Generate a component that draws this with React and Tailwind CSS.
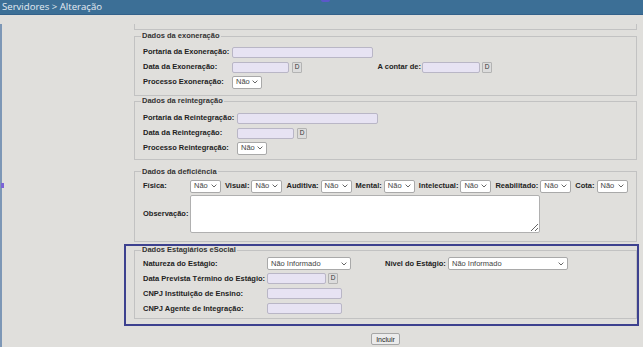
import React from 'react';

function Input({ w }) {
  return <div className={`h-[11px] bg-[#e7e3f3] border border-[#b9b6c6] rounded-[2px] ${w}`}></div>;
}

function DateBtn({ className = '' }) {
  return (
    <div className={`w-[10px] h-[11px] bg-[#dcdcdc] border border-[#b3b3b3] rounded-[1px] flex items-center justify-center text-[6.5px] leading-none text-[#333] ${className}`}>
      D
    </div>
  );
}

function Select({ w, text = 'Não', className = '' }) {
  return (
    <div className={`h-[13px] bg-white border border-[#a9a9a9] rounded-[2px] flex items-center justify-between pl-[3px] pr-[3px] ${w} ${className}`}>
      <span className="text-[7.5px] leading-none text-[#444]">{text}</span>
      <svg width="6" height="4" viewBox="0 0 6 4">
        <path d="M0.6 0.6 L3 3 L5.4 0.6" fill="none" stroke="#555" strokeWidth="0.9" />
      </svg>
    </div>
  );
}

function Box({ title, children, className = '' }) {
  return (
    <fieldset className={`w-[503px] border border-[#c2c2c2] px-[8px] ${className}`}>
      <legend className="ml-[-2px] px-[1px] text-[7.5px] leading-[10px] font-bold text-[#333]">{title}</legend>
      {children}
    </fieldset>
  );
}

export default function App() {
  return (
    <div className="w-[643px] h-[347px] overflow-hidden bg-[#e0dfdc] font-['Liberation_Sans',Arial,sans-serif] text-[7.5px] text-[#222]">
      {/* Title bar */}
      <div className="relative h-[15px] bg-[#3c6f96] border-b border-[#33618a] pl-[2px] font-['Open_Sans',sans-serif] text-[9.6px] leading-[14px] text-[#e4ecf3]">
        Servidores &gt; Alteração
        <div className="absolute left-[321px] top-0 w-[9px] h-[2px] rounded-b-[2px] bg-[#5b58c9]"></div>
      </div>

      <div className="relative h-[332px] border-l-2 border-[#7d97b6] pl-[122px]">
        <div className="absolute left-[-1px] top-[159px] w-[3px] h-[5px] bg-[#7b63d6]"></div>

        {/* Tail of the previous fieldset */}
        <div className="ml-[10px] mt-[9px] w-[503px] h-[6px] border-x border-b border-[#c2c2c2]"></div>

        <div className="ml-[10px]">
          <Box title="Dados da exoneração" className="mt-[1px] pt-[3.5px] pb-[5.5px]">
            <div className="flex items-center h-[15px]">
              <span className="w-[89px] font-bold">Portaria da Exoneração:</span>
              <Input w="w-[141px]" />
            </div>
            <div className="flex items-center h-[15px]">
              <span className="w-[89px] font-bold">Data da Exoneração:</span>
              <Input w="w-[57px]" />
              <DateBtn className="ml-[3px]" />
              <span className="w-[119px] text-right font-bold">A contar de:</span>
              <div className="ml-[1px]"><Input w="w-[58px]" /></div>
              <DateBtn className="ml-[2px]" />
            </div>
            <div className="flex items-center h-[15px]">
              <span className="w-[89px] font-bold">Processo Exoneração:</span>
              <Select w="w-[30px]" />
            </div>
          </Box>

          <Box title="Dados da reintegração" className="pt-[4.5px] pb-[3px]">
            <div className="flex items-center h-[15px]">
              <span className="w-[94px] font-bold">Portaria da Reintegração:</span>
              <Input w="w-[141px]" />
            </div>
            <div className="flex items-center h-[15px]">
              <span className="w-[94px] font-bold">Data da Reintegração:</span>
              <Input w="w-[57px]" />
              <DateBtn className="ml-[3px]" />
            </div>
            <div className="flex items-center h-[15px]">
              <span className="w-[94px] font-bold">Processo Reintegração:</span>
              <Select w="w-[30px]" />
            </div>
          </Box>

          <Box title="Dados da deficiência" className="mt-[7px] pt-[2px] pb-[7.5px]">
            <div className="flex items-center h-[15px]">
              <span className="w-[47px] font-bold">Física:</span>
              <Select w="w-[31px]" />
              <span className="ml-[4px] font-bold">Visual:</span>
              <Select w="w-[31px]" className="ml-[2px]" />
              <span className="ml-[4px] font-bold">Auditiva:</span>
              <Select w="w-[31px]" className="ml-[2px]" />
              <span className="ml-[4px] font-bold">Mental:</span>
              <Select w="w-[31px]" className="ml-[2px]" />
              <span className="ml-[4px] font-bold">Intelectual:</span>
              <Select w="w-[31px]" className="ml-[2px]" />
              <span className="ml-[4px] font-bold">Reabilitado:</span>
              <Select w="w-[31px]" className="ml-[2px]" />
              <span className="ml-[4px] font-bold">Cota:</span>
              <Select w="w-[31px]" className="ml-[2px]" />
            </div>
            <div className="flex items-center mt-[1.5px]">
              <span className="w-[47px] font-bold">Observação:</span>
              <textarea readOnly className="block w-[350px] h-[38px] bg-white border border-[#b0b0b0] rounded-[2px]"></textarea>
            </div>
          </Box>
        </div>

        {/* eSocial block */}
        <div className="mt-[2.5px] w-[515px] border-2 border-[#3d418f] pl-[8px] pb-[5.5px]">
          <fieldset className="w-[503px] border border-[#c2c2c2] px-[8px] pt-[2px] pb-[1.5px]">
            <legend className="ml-[-2px] px-[1px] text-[7.5px] leading-[8px] font-bold text-[#333]">Dados Estagiários eSocial</legend>
            <div className="flex items-center h-[15px]">
              <span className="w-[124px] font-bold">Natureza do Estágio:</span>
              <Select w="w-[84px]" text="Não Informado" />
              <span className="ml-[34px] w-[63px] font-bold">Nível do Estágio:</span>
              <Select w="w-[120px]" text="Não Informado" />
            </div>
            <div className="flex items-center h-[15px]">
              <span className="w-[124px] font-bold">Data Prevista Término do Estágio:</span>
              <Input w="w-[59px]" />
              <DateBtn className="ml-[2px]" />
            </div>
            <div className="flex items-center h-[15px]">
              <span className="w-[124px] font-bold">CNPJ Instituição de Ensino:</span>
              <Input w="w-[75px]" />
            </div>
            <div className="flex items-center h-[15px]">
              <span className="w-[124px] font-bold">CNPJ Agente de Integração:</span>
              <Input w="w-[75px]" />
            </div>
          </fieldset>
        </div>

        <div className="ml-[10px] w-[503px] mt-[7px] flex justify-center">
          <button className="h-[12px] px-[4px] bg-[#ebebeb] border border-[#a6a6a6] rounded-[2px] text-[7px] leading-none text-[#222]">
            Incluir
          </button>
        </div>
      </div>
    </div>
  );
}
